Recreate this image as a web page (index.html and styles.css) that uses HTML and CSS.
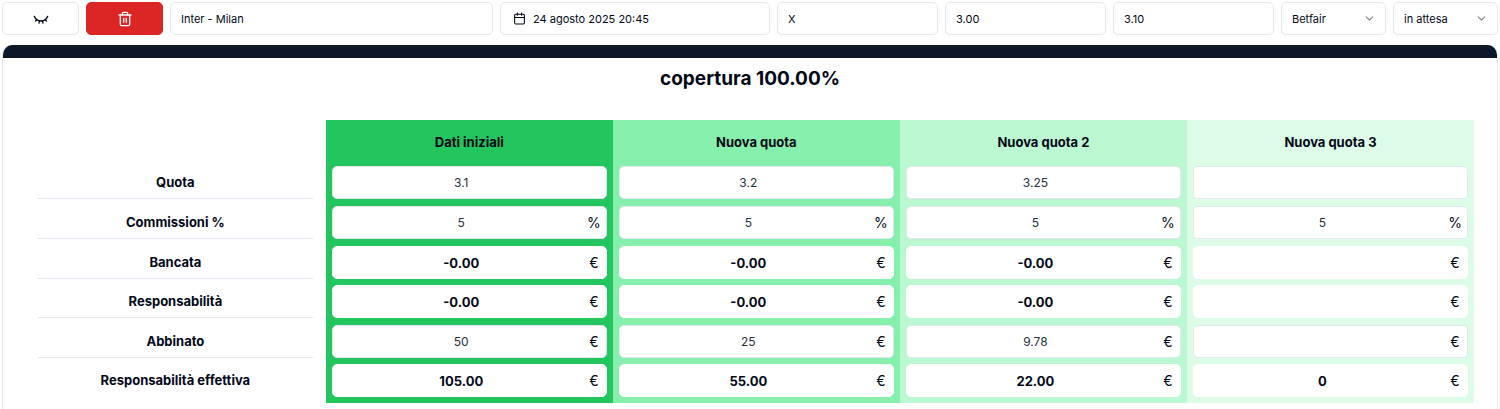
FILE: index.html
```html
<!DOCTYPE html>
<html lang="it">
<head>
    <meta charset="UTF-8">
    <meta name="viewport" content="width=device-width, initial-scale=1.0">
    <title>Copertura</title>
    <link rel="stylesheet" href="styles.css">
</head>
<body>
    <form class="toolbar">
        <button type="button" class="btn" aria-label="Nascondi">
            <svg class="icon" viewBox="0 0 24 24"><path d="m15 18-.722-3.25"/><path d="M2 8a10.645 10.645 0 0 0 20 0"/><path d="m20 15-1.726-2.05"/><path d="m4 15 1.726-2.05"/><path d="m9 18 .722-3.25"/></svg>
        </button>
        <button type="button" class="btn btn-delete" aria-label="Elimina">
            <svg class="icon" viewBox="0 0 24 24"><path d="M3 6h18"/><path d="M19 6v14a2 2 0 0 1-2 2H7a2 2 0 0 1-2-2V6"/><path d="M8 6V4a2 2 0 0 1 2-2h4a2 2 0 0 1 2 2v2"/><path d="M10 11v6"/><path d="M14 11v6"/></svg>
        </button>
        <input class="box" type="text" aria-label="Evento" value="Inter - Milan">
        <button type="button" class="btn btn-date">
            <svg class="icon icon-date" viewBox="0 0 24 24"><path d="M8 2v4"/><path d="M16 2v4"/><rect width="18" height="18" x="3" y="4" rx="2"/><path d="M3 10h18"/></svg>
            24 agosto 2025 20:45
        </button>
        <input class="box" type="text" aria-label="Segno" value="X">
        <input class="box" type="text" aria-label="Quota punta" value="3.00">
        <input class="box" type="text" aria-label="Quota banca" value="3.10">
        <div class="select">
            <select class="box" aria-label="Exchange">
                <option>Betfair</option>
            </select>
            <svg class="icon chevron" viewBox="0 0 24 24"><path d="m6 9 6 6 6-6"/></svg>
        </div>
        <div class="select">
            <select class="box" aria-label="Stato">
                <option>in attesa</option>
            </select>
            <svg class="icon chevron" viewBox="0 0 24 24"><path d="m6 9 6 6 6-6"/></svg>
        </div>
    </form>

    <main class="card">
        <div class="card-bar"></div>
        <h1>copertura 100.00%</h1>

        <div class="card-content">
            <table class="quote-table">
                <colgroup>
                    <col class="col-label">
                    <col class="col-1">
                    <col class="col-2">
                    <col class="col-3">
                    <col class="col-4">
                </colgroup>
                <thead>
                    <tr>
                        <td></td>
                        <th scope="col">Dati iniziali</th>
                        <th scope="col">Nuova quota</th>
                        <th scope="col">Nuova quota 2</th>
                        <th scope="col">Nuova quota 3</th>
                    </tr>
                </thead>
                <tbody>
                    <tr>
                        <th scope="row"><div class="row-label">Quota</div></th>
                        <td><div class="field no-unit"><input type="text" aria-label="Quota, dati iniziali" value="3.1"></div></td>
                        <td><div class="field no-unit"><input type="text" aria-label="Quota, nuova quota" value="3.2"></div></td>
                        <td><div class="field no-unit"><input type="text" aria-label="Quota, nuova quota 2" value="3.25"></div></td>
                        <td><div class="field no-unit"><input type="text" aria-label="Quota, nuova quota 3"></div></td>
                    </tr>
                    <tr>
                        <th scope="row"><div class="row-label">Commissioni %</div></th>
                        <td><div class="field"><input type="text" aria-label="Commissioni, dati iniziali" value="5"><span class="unit">%</span></div></td>
                        <td><div class="field"><input type="text" aria-label="Commissioni, nuova quota" value="5"><span class="unit">%</span></div></td>
                        <td><div class="field"><input type="text" aria-label="Commissioni, nuova quota 2" value="5"><span class="unit">%</span></div></td>
                        <td><div class="field"><input type="text" aria-label="Commissioni, nuova quota 3" value="5"><span class="unit">%</span></div></td>
                    </tr>
                    <tr class="result-row">
                        <th scope="row"><div class="row-label">Bancata</div></th>
                        <td><div class="field result"><output>-0.00</output><span class="unit">€</span></div></td>
                        <td><div class="field result"><output>-0.00</output><span class="unit">€</span></div></td>
                        <td><div class="field result"><output>-0.00</output><span class="unit">€</span></div></td>
                        <td><div class="field result"><output></output><span class="unit">€</span></div></td>
                    </tr>
                    <tr>
                        <th scope="row"><div class="row-label">Responsabilità</div></th>
                        <td><div class="field result"><output>-0.00</output><span class="unit">€</span></div></td>
                        <td><div class="field result"><output>-0.00</output><span class="unit">€</span></div></td>
                        <td><div class="field result"><output>-0.00</output><span class="unit">€</span></div></td>
                        <td><div class="field result"><output></output><span class="unit">€</span></div></td>
                    </tr>
                    <tr class="result-row">
                        <th scope="row"><div class="row-label">Abbinato</div></th>
                        <td><div class="field"><input type="text" aria-label="Abbinato, dati iniziali" value="50"><span class="unit">€</span></div></td>
                        <td><div class="field"><input type="text" aria-label="Abbinato, nuova quota" value="25"><span class="unit">€</span></div></td>
                        <td><div class="field"><input type="text" aria-label="Abbinato, nuova quota 2" value="9.78"><span class="unit">€</span></div></td>
                        <td><div class="field"><input type="text" aria-label="Abbinato, nuova quota 3"><span class="unit">€</span></div></td>
                    </tr>
                    <tr class="total-row">
                        <th scope="row"><div class="row-label">Responsabilità effettiva</div></th>
                        <td><div class="field result"><output>105.00</output><span class="unit">€</span></div></td>
                        <td><div class="field result"><output>55.00</output><span class="unit">€</span></div></td>
                        <td><div class="field result"><output>22.00</output><span class="unit">€</span></div></td>
                        <td><div class="field result"><output>0</output><span class="unit">€</span></div></td>
                    </tr>
                </tbody>
            </table>
        </div>
    </main>
</body>
</html>
```

FILE: styles.css
```css
* {
    box-sizing: border-box;
}

body {
    display: flex;
    flex-direction: column;
    min-height: 100vh;
    margin: 0;
    padding: 2px 2px 0;
    font-family: Inter, "Liberation Sans", sans-serif;
    font-size: 13px;
    color: #020817;
    background-color: #fff;
}

input, select, button {
    font-family: inherit;
    font-size: 11px;
    color: inherit;
}

/* Toolbar */
.toolbar {
    display: grid;
    grid-template-columns: 77fr 77fr 323fr 270fr 161fr 161fr 161fr 105fr 105fr;
    gap: 7px;
    margin-bottom: 10px;
}

.box, .btn {
    width: 100%;
    min-width: 0;
    height: 33px;
    padding: 0 10px;
    border: 1px solid #e2e8f0;
    border-radius: 5px;
    background-color: #fff;
}

.btn {
    display: flex;
    align-items: center;
    justify-content: center;
    cursor: pointer;
}

.btn-delete {
    border-color: #dc2626;
    background-color: #dc2626;
    color: #f8fafc;
}

.btn-date {
    justify-content: flex-start;
    gap: 7px;
    padding: 0 12px;
}

.icon {
    width: 16px;
    height: 16px;
    fill: none;
    stroke: currentColor;
    stroke-width: 2;
    stroke-linecap: round;
    stroke-linejoin: round;
}

.icon-date {
    width: 13px;
    height: 13px;
}

.select {
    position: relative;
}

.select select {
    appearance: none;
}

.chevron {
    position: absolute;
    top: 10px;
    right: 10px;
    width: 13px;
    height: 13px;
    opacity: 0.5;
    pointer-events: none;
}

/* Card */
.card {
    flex: 1;
    border: 1px solid #e2e8f0;
    border-width: 0 1px;
    border-radius: 10px 10px 0 0;
    overflow: hidden;
}

.card-bar {
    height: 13px;
    background-color: #0d1729;
}

h1 {
    margin: 6px 0 26px;
    font-size: 19px;
    font-weight: 700;
    line-height: 30px;
    text-align: center;
}

.card-content {
    padding: 0 23px 6px;
}

.quote-table {
    width: 100%;
    table-layout: fixed;
    border-collapse: collapse;
}

.quote-table th, .quote-table td {
    padding: 3px 6px 4px;
    font-weight: 700;
    text-align: center;
}

.quote-table .result-row th, .quote-table .result-row td {
    padding-bottom: 3px;
}

.quote-table .total-row th, .quote-table .total-row td {
    padding-bottom: 6px;
}

.quote-table thead th {
    height: 43px;
    padding: 4px 6px 3px;
}

.quote-table tbody th {
    padding-left: 12px;
    padding-right: 13px;
}

.col-label {
    width: 20.7%;
}

.col-1 {
    background-color: #22c55e;
}

.col-2 {
    background-color: #86efac;
}

.col-3 {
    background-color: #bbf7d0;
}

.col-4 {
    background-color: #dcfce7;
}

.row-label {
    height: 33px;
    border-bottom: 1px solid #e2e8f0;
    line-height: 32px;
}

.total-row .row-label {
    border-bottom: none;
}

.field {
    display: flex;
    align-items: center;
    height: 33px;
    padding-left: 8px;
    border: 1px solid #e2e8f0;
    border-radius: 5px;
    background-color: #fff;
}

.field input, .field output {
    flex: 1;
    min-width: 0;
    padding: 0;
    border: none;
    background: none;
    text-align: center;
}

.field input {
    font-size: 12px;
    color: #27303f;
}

.no-unit {
    padding-right: 24px;
}

.result {
    border-color: #fff;
}

.unit {
    width: 24px;
    font-size: 14px;
    font-weight: 400;
    line-height: 16px;
}
```
